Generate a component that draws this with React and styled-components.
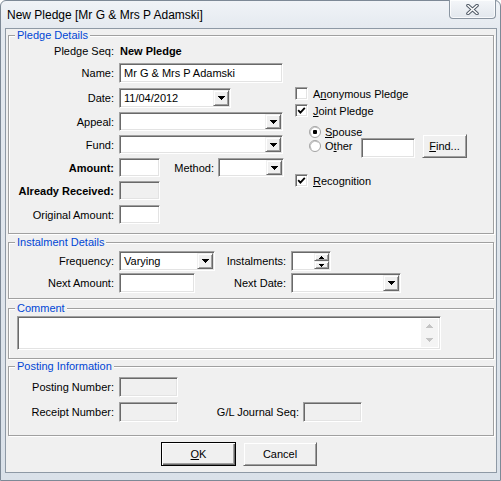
import React from "react";
import styled, { createGlobalStyle } from "styled-components";

const GlobalStyle = createGlobalStyle`
  * { box-sizing: border-box; }
  html, body { margin: 0; padding: 0; background: #ffffff; }
  body { font-family: "Liberation Sans", Arial, sans-serif; font-size: 11px; color: #000; }
`;

const Window = styled.div`
  width: 501px;
  height: 481px;
  border: 1px solid #7d8996;
  border-radius: 6px 6px 0 0;
  background: linear-gradient(180deg, #f0f3f7 0%, #e4e9ef 6%, #dae1e9 100%);
  padding: 0 3px 7px 4px;
  display: flex;
  flex-direction: column;
`;

const TitleBar = styled.div`
  height: 27px;
  flex-shrink: 0;
  display: flex;
  align-items: flex-start;
  justify-content: space-between;
`;

const Title = styled.div`
  font-size: 12px;
  line-height: 14px;
  margin: 7px 0 0 2px;
  color: #000;
  white-space: nowrap;
`;

const CloseButton = styled.div`
  width: 47px;
  height: 19px;
  margin: -1px 1px 0 0;
  border: 1px solid #8a95a1;
  border-top: none;
  border-radius: 0 0 4px 4px;
  background: linear-gradient(180deg, #f4f6f9 0%, #e2e7ed 100%);
  box-shadow: inset 0 0 0 1px rgba(255, 255, 255, 0.75);
  display: flex;
  align-items: center;
  justify-content: center;
`;

const Client = styled.div`
  flex: 1;
  background: #f0f0f0;
  border: 1px solid #8e99a5;
  padding: 0 1px;
  display: flex;
  flex-direction: column;
`;

const Group = styled.fieldset`
  margin: ${(p) => p.$mt || 0}px 1px 0;
  padding: ${(p) => p.$pt || 0}px 0 0 0;
  border: 1px solid #a0a0a0;
  box-shadow: inset 1px 1px 0 #fff, 1px 1px 0 #fff;
  min-width: 0;
  height: ${(p) => p.$h}px;
  flex-shrink: 0;
`;

const Legend = styled.legend`
  color: #0046d5;
  font-size: 11px;
  line-height: 13px;
  padding: 0 2px;
  margin-left: 6px;
  background: #f0f0f0;
`;

const PledgeBody = styled.div`
  display: flex;
`;

const Column = styled.div`
  display: flex;
  flex-direction: column;
  width: ${(p) => (p.$w ? `${p.$w}px` : "auto")};
  margin-left: ${(p) => p.$ml || 0}px;
  flex-shrink: 0;
`;

const FormRow = styled.div`
  display: flex;
  align-items: center;
  height: ${(p) => p.$h || 19}px;
  margin-top: ${(p) => p.$mt || 0}px;
  flex-shrink: 0;
`;

const Label = styled.span`
  width: ${(p) => p.$w || 105}px;
  margin-right: ${(p) => (p.$mr === undefined ? 5 : p.$mr)}px;
  margin-left: ${(p) => p.$ml || 0}px;
  text-align: ${(p) => p.$align || "right"};
  font-weight: ${(p) => (p.$bold ? "bold" : "normal")};
  white-space: nowrap;
  flex-shrink: 0;
`;

const Value = styled.span`
  font-weight: bold;
  margin-left: 1px;
`;

const sunken = `
  border-style: solid;
  border-width: 1px;
  border-color: #a0a0a0 #ffffff #ffffff #a0a0a0;
  box-shadow: inset 1px 1px 0 #696969, inset -1px -1px 0 #e3e3e3;
`;

const raised = `
  border-style: solid;
  border-width: 1px;
  border-color: #f0f0f0 #696969 #696969 #f0f0f0;
  box-shadow: inset 1px 1px 0 #ffffff, inset -1px -1px 0 #a0a0a0;
  background: #f0f0f0;
`;

const TextInput = styled.input`
  ${sunken}
  width: ${(p) => p.$w}px;
  height: ${(p) => p.$h || 19}px;
  background: ${(p) => (p.disabled ? "#f0f0f0" : "#ffffff")};
  font-family: inherit;
  font-size: 11px;
  color: #000;
  padding: 0 0 0 4px;
  margin: 0;
  outline: none;
  flex-shrink: 0;
  align-self: ${(p) => p.$self || "auto"};
`;

const ComboBox = styled.div`
  ${sunken}
  width: ${(p) => p.$w}px;
  height: ${(p) => p.$h || 19}px;
  background: #ffffff;
  display: flex;
  align-items: stretch;
  padding: 1px;
  flex-shrink: 0;
`;

const ComboText = styled.div`
  flex: 1;
  display: flex;
  align-items: center;
  padding-left: 3px;
  white-space: nowrap;
  overflow: hidden;
`;

const DropButton = styled.div`
  ${raised}
  width: 16px;
  display: flex;
  align-items: center;
  justify-content: center;
`;

const SpinBox = styled.div`
  ${sunken}
  width: ${(p) => p.$w}px;
  height: 20px;
  background: #ffffff;
  display: flex;
  justify-content: flex-end;
  padding: 1px;
`;

const SpinButtons = styled.div`
  width: 15px;
  display: flex;
  flex-direction: column;
`;

const SpinButton = styled.div`
  ${raised}
  flex: 1;
  display: flex;
  align-items: center;
  justify-content: center;
`;

const CheckRow = styled.div`
  display: flex;
  align-items: center;
  height: ${(p) => p.$h || 13}px;
  margin-top: ${(p) => p.$mt || 0}px;
  margin-left: ${(p) => p.$indent || 0}px;
  flex-shrink: 0;
`;

const CheckBox = styled.div`
  ${sunken}
  width: 13px;
  height: 13px;
  background: #ffffff;
  margin-right: 5px;
  flex-shrink: 0;
  display: flex;
  align-items: center;
  justify-content: center;
`;

const RadioMark = styled.svg`
  width: 12px;
  height: 12px;
  margin-right: 4px;
  flex-shrink: 0;
`;

const OptionText = styled.span`
  white-space: nowrap;
  width: ${(p) => (p.$w ? `${p.$w}px` : "auto")};
  flex-shrink: 0;
`;

const PushButton = styled.div`
  ${raised}
  width: ${(p) => p.$w}px;
  height: ${(p) => p.$h || 24}px;
  margin-left: ${(p) => p.$ml || 0}px;
  display: flex;
  align-items: center;
  justify-content: center;
  flex-shrink: 0;
  ${(p) =>
    p.$default
      ? `
    border-color: #000;
    box-shadow: inset 1px 1px 0 #ffffff, inset -1px -1px 0 #696969, inset -2px -2px 0 #a0a0a0;
  `
      : ""}
`;

const FieldGrid = styled.div`
  display: grid;
  grid-template-columns: ${(p) => p.$cols};
  grid-auto-rows: ${(p) => p.$rowH || 20}px;
  column-gap: 5px;
  row-gap: ${(p) => p.$rowGap || 2}px;
  align-items: center;
  justify-items: start;
`;

const GridLabel = styled.span`
  justify-self: stretch;
  text-align: right;
  white-space: nowrap;
`;

const MemoBox = styled.div`
  ${sunken}
  width: 424px;
  height: 34px;
  margin-left: 8px;
  background: #ffffff;
  display: flex;
  justify-content: flex-end;
  padding: 2px;
`;

const ScrollBar = styled.div`
  width: 17px;
  background: #f4f4f4;
  display: flex;
  flex-direction: column;
  justify-content: space-between;
`;

const ScrollArrow = styled.div`
  height: 15px;
  display: flex;
  align-items: center;
  justify-content: center;
`;

const ButtonRow = styled.div`
  display: flex;
  padding-left: 154px;
  margin-top: 6px;
`;

const Arrow = ({ up, color = "#000" }) => (
  <svg width="7" height="4" viewBox="0 0 7 4" fill={color} shapeRendering="crispEdges">
    {up ? (
      <path d="M3 0h1v1H3zM2 1h3v1H2zM1 2h5v1H1zM0 3h7v1H0z" />
    ) : (
      <path d="M0 0h7v1H0zM1 1h5v1H1zM2 2h3v1H2zM3 3h1v1H3z" />
    )}
  </svg>
);

const SmallArrow = ({ up, color }) => (
  <svg width="5" height="3" viewBox="0 0 5 3" fill={color} shapeRendering="crispEdges">
    {up ? (
      <path d="M2 0h1v1H2zM1 1h3v1H1zM0 2h5v1H0z" />
    ) : (
      <path d="M0 0h5v1H0zM1 1h3v1H1zM2 2h1v1H2z" />
    )}
  </svg>
);

const Tick = () => (
  <svg width="9" height="9" viewBox="0 0 9 9">
    <path d="M1.2 4.2 L3.4 6.6 L7.8 1.8" fill="none" stroke="#000" strokeWidth="1.8" />
  </svg>
);

const Radio = ({ checked }) => (
  <RadioMark viewBox="0 0 12 12">
    <circle cx="6" cy="6" r="5.5" fill="#fff" stroke="#a0a0a0" strokeWidth="1" />
    <path d="M2.2 9.2 A5 5 0 0 1 9.2 2.2" fill="none" stroke="#b8b8b8" strokeWidth="1" />
    {checked && <rect x="4" y="4" width="4" height="4" rx="1" fill="#000" />}
  </RadioMark>
);

const Combo = ({ w, h, text }) => (
  <ComboBox $w={w} $h={h}>
    <ComboText>{text}</ComboText>
    <DropButton>
      <Arrow />
    </DropButton>
  </ComboBox>
);

export default function App() {
  return (
    <>
      <GlobalStyle />
      <Window>
        <TitleBar>
          <Title>New Pledge [Mr G &amp; Mrs P Adamski]</Title>
          <CloseButton>
            <svg width="13" height="11" viewBox="0 0 13 11">
              <path d="M2 1.5 L11 9.5 M11 1.5 L2 9.5" stroke="#4f5965" strokeWidth="3.6" strokeLinecap="round" fill="none" />
              <path d="M2 1.5 L11 9.5 M11 1.5 L2 9.5" stroke="#ffffff" strokeWidth="1.6" strokeLinecap="round" fill="none" />
            </svg>
          </CloseButton>
        </TitleBar>
        <Client>
          <Group $h={205}>
            <Legend>Pledge Details</Legend>
            <PledgeBody>
              <Column $w={274}>
                <FormRow $h={14} $mt={2}>
                  <Label>Pledge Seq:</Label>
                  <Value>New Pledge</Value>
                </FormRow>
                <FormRow $h={20} $mt={5}>
                  <Label>Name:</Label>
                  <TextInput $w={164} $h={20} defaultValue="Mr G & Mrs P Adamski" />
                </FormRow>
                <FormRow $h={20} $mt={5}>
                  <Label>Date:</Label>
                  <Combo w={112} h={20} text="11/04/2012" />
                </FormRow>
                <FormRow $mt={4}>
                  <Label>Appeal:</Label>
                  <Combo w={164} text="" />
                </FormRow>
                <FormRow $mt={4}>
                  <Label>Fund:</Label>
                  <Combo w={164} text="" />
                </FormRow>
                <FormRow $mt={4}>
                  <Label $bold>Amount:</Label>
                  <TextInput $w={41} />
                  <Label $w={41} $ml={13} $mr={4}>Method:</Label>
                  <Combo w={66} text="" />
                </FormRow>
                <FormRow $mt={4}>
                  <Label $bold>Already Received:</Label>
                  <TextInput $w={41} disabled />
                </FormRow>
                <FormRow $mt={5}>
                  <Label>Original Amount:</Label>
                  <TextInput $w={41} />
                </FormRow>
              </Column>
              <Column $ml={12}>
                <CheckRow $mt={45}>
                  <CheckBox />
                  <OptionText>
                    A<u>n</u>onymous Pledge
                  </OptionText>
                </CheckRow>
                <CheckRow $mt={4}>
                  <CheckBox>
                    <Tick />
                  </CheckBox>
                  <OptionText>
                    <u>J</u>oint Pledge
                  </OptionText>
                </CheckRow>
                <CheckRow $mt={8} $indent={14}>
                  <Radio checked />
                  <OptionText>
                    <u>S</u>pouse
                  </OptionText>
                </CheckRow>
                <CheckRow $mt={-4} $h={24} $indent={14}>
                  <Radio />
                  <OptionText $w={36}>
                    O<u>t</u>her
                  </OptionText>
                  <TextInput $w={54} $h={20} $self="flex-end" />
                  <PushButton $w={45} $ml={7}>
                    <span>
                      <u>F</u>ind...
                    </span>
                  </PushButton>
                </CheckRow>
                <CheckRow $mt={16}>
                  <CheckBox>
                    <Tick />
                  </CheckBox>
                  <OptionText>
                    <u>R</u>ecognition
                  </OptionText>
                </CheckRow>
              </Column>
            </PledgeBody>
          </Group>

          <Group $h={63} $mt={2} $pt={2}>
            <Legend>Instalment Details</Legend>
            <FieldGrid $cols="105px 96px 66px 110px">
              <GridLabel>Frequency:</GridLabel>
              <Combo w={96} h={20} text="Varying" />
              <GridLabel>Instalments:</GridLabel>
              <SpinBox $w={40}>
                <SpinButtons>
                  <SpinButton>
                    <SmallArrow up color="#000" />
                  </SpinButton>
                  <SpinButton>
                    <SmallArrow color="#000" />
                  </SpinButton>
                </SpinButtons>
              </SpinBox>
              <GridLabel>Next Amount:</GridLabel>
              <TextInput $w={76} $h={20} />
              <GridLabel>Next Date:</GridLabel>
              <Combo w={110} h={20} text="" />
            </FieldGrid>
          </Group>

          <Group $h={57} $mt={3} $pt={1}>
            <Legend>Comment</Legend>
            <MemoBox>
              <ScrollBar>
                <ScrollArrow>
                  <Arrow up color="#c4c4c4" />
                </ScrollArrow>
                <ScrollArrow>
                  <Arrow color="#c4c4c4" />
                </ScrollArrow>
              </ScrollBar>
            </MemoBox>
          </Group>

          <Group $h={76} $mt={1} $pt={4}>
            <Legend>Posting Information</Legend>
            <FormRow $h={20}>
              <Label>Posting Number:</Label>
              <TextInput $w={59} $h={20} disabled />
            </FormRow>
            <FormRow $h={20} $mt={5}>
              <Label>Receipt Number:</Label>
              <TextInput $w={59} $h={20} disabled />
              <Label $w={121} $mr={4}>G/L Journal Seq:</Label>
              <TextInput $w={59} $h={20} disabled />
            </FormRow>
          </Group>

          <ButtonRow>
            <PushButton $w={75} $default>
              <span>
                <u>O</u>K
              </span>
            </PushButton>
            <PushButton $w={74} $ml={7}>
              Cancel
            </PushButton>
          </ButtonRow>
        </Client>
      </Window>
    </>
  );
}
